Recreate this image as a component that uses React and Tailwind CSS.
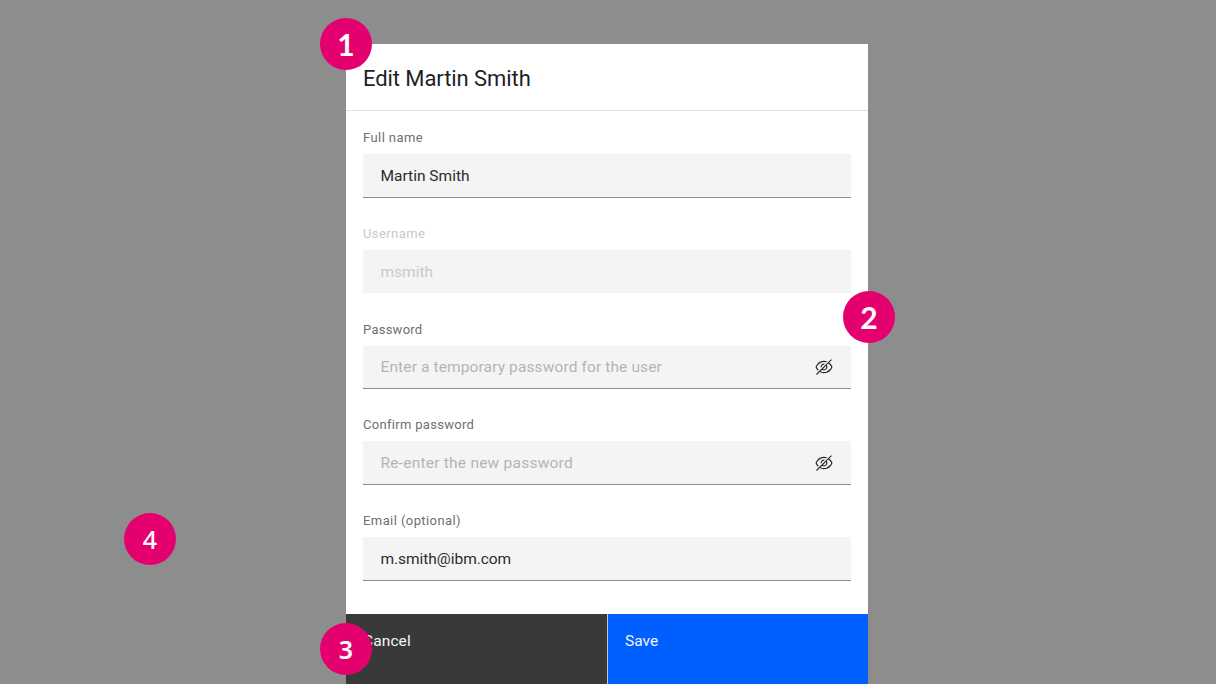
const fields = [
  { label: 'Full name', labelClass: 'tracking-[0.42px] text-[#6f6f6f]', value: 'Martin Smith', textClass: 'pt-px tracking-[0px]' },
  { label: 'Username', labelClass: 'tracking-[0.42px] text-[#c9c9c9]', value: 'msmith', disabled: true, textClass: 'tracking-[0px]' },
  { label: 'Password', labelClass: 'tracking-[0.25px] text-[#6f6f6f]', placeholder: 'Enter a temporary password for the user', secret: true, textClass: 'pt-px tracking-[0.12px]' },
  { label: 'Confirm password', labelClass: 'tracking-[0.3px] text-[#6f6f6f]', placeholder: 'Re-enter the new password', secret: true, textClass: 'pt-px tracking-[0.23px]' },
  { label: 'Email (optional)', labelClass: 'tracking-[0.42px] text-[#6f6f6f]', value: 'm.smith@ibm.com', textClass: 'pt-px tracking-[-0.04px]' },
];

function ViewOff() {
  return (
    <svg viewBox="0 0 32 32" className="h-[18px] w-[18px]" fill="#262626" aria-hidden="true">
      <path d="M5.24,22.51l1.43-1.42A14.06,14.06,0,0,1,3.07,16C5.1,10.93,10.7,7,16,7a12.38,12.38,0,0,1,4,.72l1.55-1.56A14.72,14.72,0,0,0,16,5,16.69,16.69,0,0,0,1.06,15.66a1,1,0,0,0,0,.68A16,16,0,0,0,5.24,22.51Z" />
      <path d="M12 15.73a4 4 0 0 1 3.7-3.7l1.81-1.82a6 6 0 0 0-7.33 7.33z" />
      <path d="M30.94 15.66A16.4 16.4 0 0 0 25.2 8.22L30 3.41 28.59 2 2 28.59 3.41 30l5.1-5.1A15.29 15.29 0 0 0 16 27 16.69 16.69 0 0 0 30.94 16.34 1 1 0 0 0 30.94 15.66zM20 16a4 4 0 0 1-6 3.44L19.44 14A4 4 0 0 1 20 16zm-4 9a13.05 13.05 0 0 1-6-1.58l2.54-2.54a6 6 0 0 0 8.35-8.35l2.87-2.87A14.54 14.54 0 0 1 28.93 16C26.9 21.07 21.3 25 16 25z" />
    </svg>
  );
}

function Field({ label, labelClass, value, placeholder, secret, disabled, textClass }) {
  return (
    <label className="block h-[95.75px]">
      <span className={`block h-[25px] text-[13px] leading-[18px] ${labelClass}`}>{label}</span>
      <span className={`flex h-[43.5px] items-center bg-[#f4f4f4] pr-[17.5px] pl-[17.5px] ${disabled ? '' : 'border-b border-[#8d8d8d]'}`}>
        <input
          readOnly
          disabled={disabled}
          value={value || ''}
          placeholder={placeholder}
          className={`min-w-0 flex-1 bg-transparent text-[15.5px] leading-5 text-[#2c2c2c] outline-none placeholder:text-[#b4b4b4] disabled:text-[#c9c9c9] ${textClass}`}
        />
        {secret && <ViewOff />}
      </span>
    </label>
  );
}

function Marker({ className, children }) {
  return (
    <span className={`absolute flex h-[52px] w-[52px] items-center justify-center rounded-full bg-[#e5006f] text-white ${className}`}>
      {children}
    </span>
  );
}

export default function App() {
  return (
    <main className="relative flex h-[684px] w-[1216px] overflow-hidden bg-[#8d8d8d] pt-[44px] pl-[346px] font-['Roboto',sans-serif]">
      <section className="flex h-[640px] w-[522px] flex-col bg-white">
        <header className="h-[67px] shrink-0 border-b border-[#e0e0e0] pt-[20px] pl-[17px]">
          <h1 className="text-[22px] leading-[30px] tracking-[-0.08px] text-[#1f1f1f]">Edit Martin Smith</h1>
        </header>
        <div className="h-[503px] shrink-0 pt-[18px] pr-[17.5px] pl-[17px]">
          {fields.map((field) => (
            <Field key={field.label} {...field} />
          ))}
        </div>
        <footer className="flex h-[70px] shrink-0 text-[15.5px] leading-5 text-[#f4f4f4]">
          <button className="flex w-[262px] items-start border-r border-[#c6c6c6] bg-[#393939] pt-[17px] pl-[17px] tracking-[0.1px]">Cancel</button>
          <button className="flex flex-1 items-start bg-[#0060ff] pt-[17px] pl-[17px] tracking-[0px]">Save</button>
        </footer>
      </section>
      <Marker className="top-[18px] left-[320px] font-['Lato',sans-serif] text-[30px] font-bold">1</Marker>
      <Marker className="top-[291px] left-[843px] font-['Lato',sans-serif] text-[30px] font-bold">2</Marker>
      <Marker className="top-[623px] left-[320px] pt-px font-['Noto_Sans',sans-serif] text-[25px] font-semibold">3</Marker>
      <Marker className="top-[513px] left-[124px] pt-px font-['Noto_Sans',sans-serif] text-[25px] font-medium">4</Marker>
    </main>
  );
}
